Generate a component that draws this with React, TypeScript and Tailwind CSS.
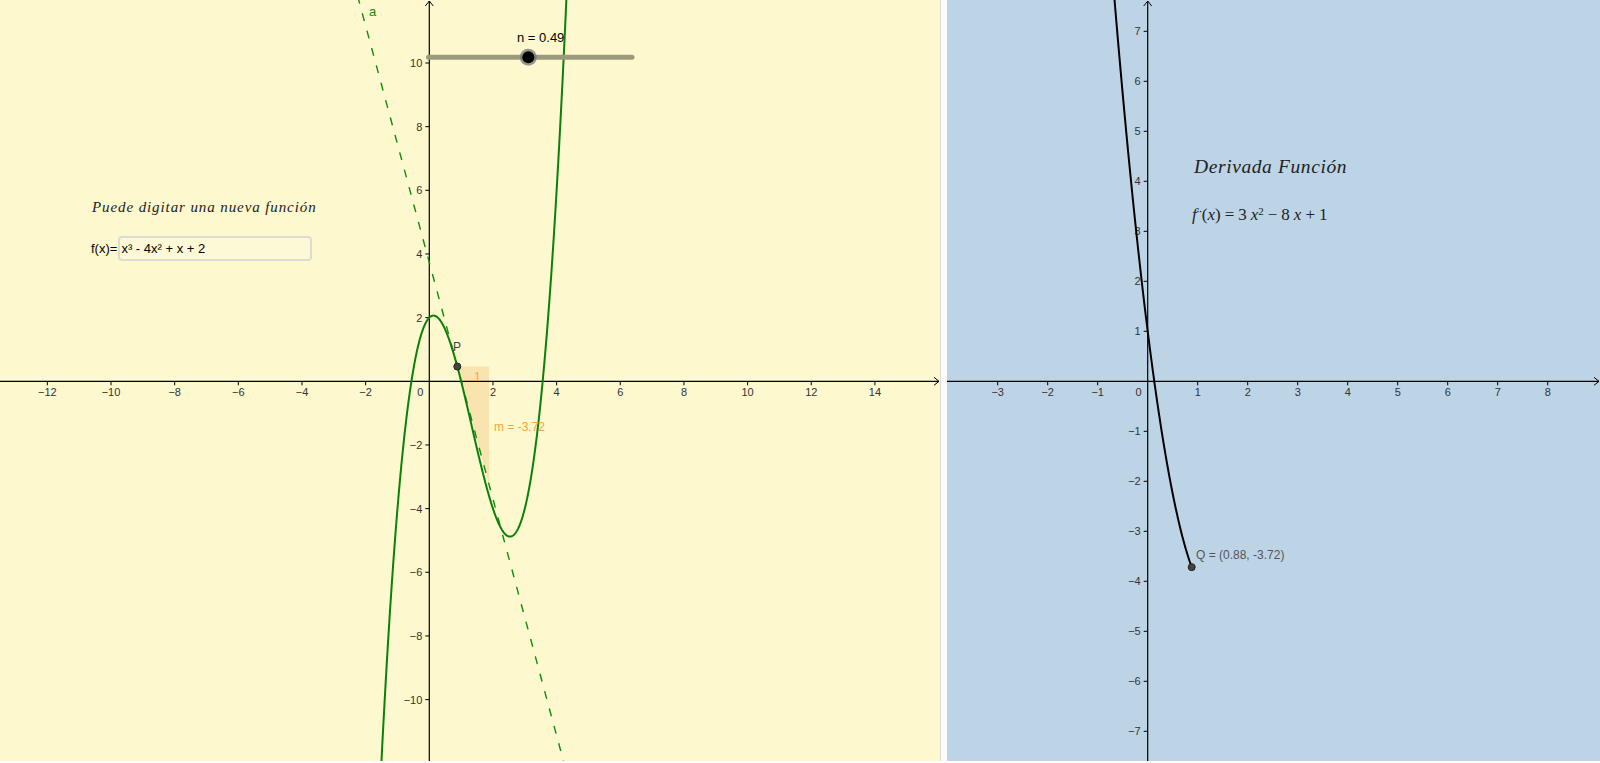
import React from 'react';

type View = { ox: number; oy: number; s: number; w: number; h: number };

const LEFT: View = { ox: 429.3, oy: 381.3, s: 31.83, w: 940, h: 761 };
const RIGHT: View = { ox: 200.7, oy: 381.3, s: 50, w: 653, h: 761 };

const f = (x: number) => x * x * x - 4 * x * x + x + 2;
const df = (x: number) => 3 * x * x - 8 * x + 1;

const px = (v: View, x: number) => v.ox + x * v.s;
const py = (v: View, y: number) => v.oy - y * v.s;

function plot(fn: (x: number) => number, x0: number, x1: number, v: View) {
  const pts: string[] = [];
  for (let x = x0; x <= x1 + 1e-9; x += 0.01) {
    pts.push(`${px(v, x).toFixed(2)},${py(v, fn(x)).toFixed(2)}`);
  }
  return 'M' + pts.join('L');
}

const fmt = (n: number) => (n < 0 ? `\u2212${Math.abs(n)}` : `${n}`);
const LABEL_FONT = '"Liberation Sans", Arial, sans-serif';

function Axes({ v, xs, ys }: { v: View; xs: number[]; ys: number[] }) {
  return (
    <g>
      <line x1={0} y1={v.oy} x2={v.w - 1} y2={v.oy} stroke="#000" strokeWidth={1.2} />
      <line x1={v.ox} y1={1} x2={v.ox} y2={v.h} stroke="#000" strokeWidth={1.2} />
      {/* arrow heads */}
      <path d={`M${v.w - 6},${v.oy - 4}L${v.w - 1},${v.oy}L${v.w - 6},${v.oy + 4}`} fill="none" stroke="#000" strokeWidth={1} />
      <path d={`M${v.ox - 4},${6}L${v.ox},${1}L${v.ox + 4},${6}`} fill="none" stroke="#000" strokeWidth={1} />
      {xs.map((x) => (
        <g key={`x${x}`}>
          <line x1={px(v, x)} y1={v.oy} x2={px(v, x)} y2={v.oy + 4} stroke="#000" strokeWidth={1} />
          <text x={px(v, x)} y={v.oy + 15} textAnchor="middle" fontSize={11} fill="#333" fontFamily={LABEL_FONT}>
            {fmt(x)}
          </text>
        </g>
      ))}
      {ys.map((y) => (
        <g key={`y${y}`}>
          <line x1={v.ox - 4} y1={py(v, y)} x2={v.ox} y2={py(v, y)} stroke="#000" strokeWidth={1} />
          <text x={v.ox - 7} y={py(v, y) + 4} textAnchor="end" fontSize={11} fill="#333" fontFamily={LABEL_FONT}>
            {fmt(y)}
          </text>
        </g>
      ))}
      <text x={v.ox - 6} y={v.oy + 15} textAnchor="end" fontSize={11} fill="#333" fontFamily={LABEL_FONT}>
        0
      </text>
    </g>
  );
}

function LeftGraph() {
  const v = LEFT;
  const x0 = 0.88;
  const y0 = f(x0);
  const m = df(x0);
  const tangent = (x: number) => y0 + m * (x - x0);
  const P = { x: px(v, x0), y: py(v, y0) };
  const corner = { x: px(v, x0 + 1), y: P.y };
  const bottom = { x: corner.x, y: py(v, y0 + m) };

  return (
    <svg width={v.w} height={v.h} className="absolute inset-0 block">
      {/* slope triangle */}
      <polygon points={`${P.x},${P.y} ${corner.x},${corner.y} ${bottom.x},${bottom.y}`} fill="#f9e4b0" />
      <Axes
        v={v}
        xs={[-12, -10, -8, -6, -4, -2, 2, 4, 6, 8, 10, 12, 14]}
        ys={[10, 8, 6, 4, 2, -2, -4, -6, -8, -10]}
      />
      {/* tangent line a */}
      <line
        x1={px(v, -2.4)}
        y1={py(v, tangent(-2.4))}
        x2={px(v, 4.4)}
        y2={py(v, tangent(4.4))}
        stroke="#108a10"
        strokeWidth={1.4}
        strokeDasharray="8 10"
      />
      <text x={369} y={16} fontSize={13} fill="#108a10" fontFamily={LABEL_FONT}>
        a
      </text>
      {/* function */}
      <path d={plot(f, -1.7, 4.7, v)} fill="none" stroke="#0b800b" strokeWidth={2} />
      {/* slope labels */}
      <text x={474} y={381} fontSize={12} fill="#f7a23c" fontFamily={LABEL_FONT}>
        1
      </text>
      <text x={494} y={431} fontSize={12} fill="#f7a23c" fontFamily={LABEL_FONT}>
        m = -3.72
      </text>
      {/* point P */}
      <circle cx={P.x} cy={P.y} r={3.5} fill="#444" stroke="#222" strokeWidth={1} />
      <text x={453} y={351} fontSize={12} fill="#444" fontFamily={LABEL_FONT}>
        P
      </text>
      {/* slider n */}
      <line x1={428.5} y1={57.3} x2={632} y2={57.3} stroke="#9c9a7c" strokeWidth={5} strokeLinecap="round" />
      <circle cx={528.3} cy={57.3} r={8.5} fill="#777" opacity={0.75} />
      <circle cx={528.3} cy={57.3} r={6} fill="#000" />
      <text x={517} y={42} fontSize={13} fill="#000" fontFamily={LABEL_FONT}>
        n = 0.49
      </text>
    </svg>
  );
}

function RightGraph() {
  const v = RIGHT;
  const qx = 0.88;
  return (
    <svg width={v.w} height={v.h} className="absolute inset-0 block">
      <Axes
        v={v}
        xs={[-3, -2, -1, 1, 2, 3, 4, 5, 6, 7, 8]}
        ys={[7, 6, 5, 4, 3, 2, 1, -1, -2, -3, -4, -5, -6, -7]}
      />
      <path d={plot(df, -0.75, qx, v)} fill="none" stroke="#000" strokeWidth={2} />
      <circle cx={px(v, qx)} cy={py(v, df(qx))} r={3.5} fill="#444" stroke="#222" strokeWidth={1} />
    </svg>
  );
}

export default function App() {
  return (
    <div className="w-[1600px] h-[763px] bg-white overflow-hidden">
      <div className="flex h-[761px]">
        {/* Function panel */}
        <div className="relative w-[940px] shrink-0 bg-[#fdf8ce] overflow-hidden">
          <LeftGraph />
          <p className="absolute left-[92px] top-[200px] text-[15px] leading-none italic tracking-[0.9px] text-[#222] font-['Liberation_Serif',serif]">
            Puede digitar una nueva función
          </p>
          <div className="absolute left-[91px] top-[236px] flex items-center font-['Liberation_Sans',Arial,sans-serif] text-[13px] text-black">
            <span>f(x)=</span>
            <div className="ml-[1px] flex h-[25px] w-[194px] items-center rounded-[4px] border-2 border-[#dcdcd0] bg-[#fdf9d6] px-[1px]">
              x³ - 4x² + x + 2
            </div>
          </div>
        </div>
        {/* divider */}
        <div className="w-[7px] shrink-0 border-l border-[#d9d9d9] bg-[#fbfbfb]" />
        {/* Derivative panel */}
        <div className="relative flex-1 bg-[#bdd4e7] overflow-hidden">
          <RightGraph />
          <p className="absolute left-[247px] top-[157px] text-[19.5px] leading-none italic tracking-[0.6px] text-[#222] font-['Liberation_Serif',serif]">
            Derivada Función
          </p>
          <p className="absolute left-[245px] top-[206px] flex items-baseline gap-[4px] text-[17px] leading-none text-[#222] font-['Liberation_Serif',serif] whitespace-nowrap">
            <span>
              <span className="italic">f</span>
              <span className="text-[15px]">¨</span>(<span className="italic">x</span>)
            </span>
            <span>=</span>
            <span>3</span>
            <span>
              <span className="italic">x</span>
              <sup className="text-[11px]">2</sup>
            </span>
            <span>−</span>
            <span>8</span>
            <span className="italic">x</span>
            <span>+</span>
            <span>1</span>
          </p>
          <span className="absolute left-[249px] top-[549px] text-[12px] leading-none text-[#555] font-['Liberation_Sans',Arial,sans-serif] whitespace-nowrap">
            Q = (0.88, -3.72)
          </span>
        </div>
      </div>
    </div>
  );
}
